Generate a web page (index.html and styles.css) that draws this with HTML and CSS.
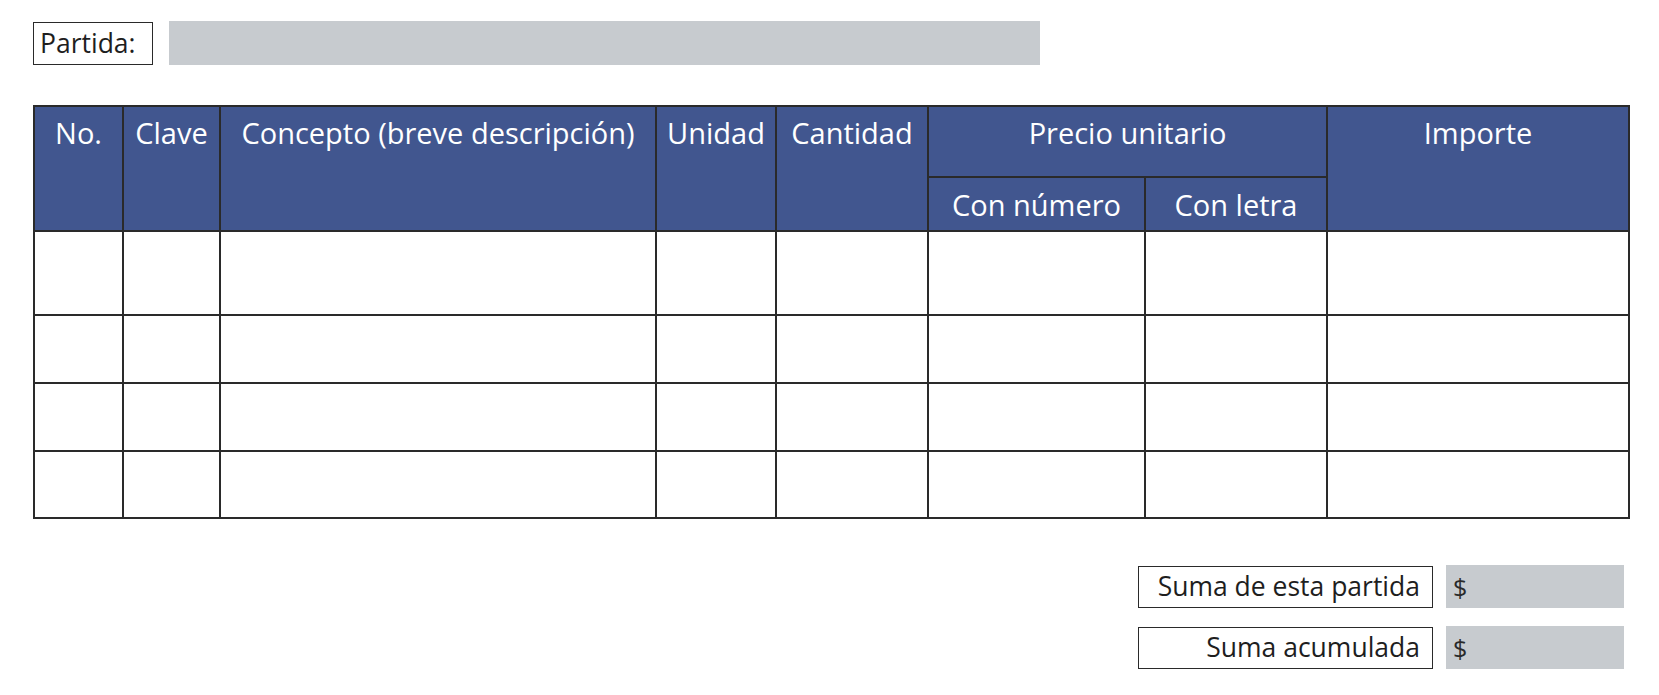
FILE: index.html
```html
<!DOCTYPE html>
<html lang="es">
<head>
<meta charset="utf-8">
<title>Partida</title>
<link rel="stylesheet" href="styles.css">
</head>
<body>
<div class="page">
  <div class="top-row">
    <div class="label-box partida">Partida:</div>
    <div class="fill-bar"></div>
  </div>

  <table class="grid">
    <colgroup>
      <col class="c-no"><col class="c-clave"><col class="c-concepto"><col class="c-unidad">
      <col class="c-cantidad"><col class="c-num"><col class="c-letra"><col class="c-importe">
    </colgroup>
    <thead>
      <tr class="h1">
        <th rowspan="2">No.</th>
        <th rowspan="2">Clave</th>
        <th rowspan="2">Concepto (breve descripción)</th>
        <th rowspan="2">Unidad</th>
        <th rowspan="2">Cantidad</th>
        <th colspan="2">Precio unitario</th>
        <th rowspan="2">Importe</th>
      </tr>
      <tr class="h2">
        <th class="sub">Con número</th>
        <th class="sub">Con letra</th>
      </tr>
    </thead>
    <tbody>
      <tr class="r1"><td></td><td></td><td></td><td></td><td></td><td></td><td></td><td></td></tr>
      <tr class="r2"><td></td><td></td><td></td><td></td><td></td><td></td><td></td><td></td></tr>
      <tr class="r2"><td></td><td></td><td></td><td></td><td></td><td></td><td></td><td></td></tr>
      <tr class="r3"><td></td><td></td><td></td><td></td><td></td><td></td><td></td><td></td></tr>
    </tbody>
  </table>

  <div class="totals">
    <div class="total-row">
      <div class="label-box sum">Suma de esta partida</div>
      <div class="fill-bar money">$</div>
    </div>
    <div class="total-row">
      <div class="label-box sum">Suma acumulada</div>
      <div class="fill-bar money">$</div>
    </div>
  </div>
</div>
</body>
</html>
```

FILE: styles.css
```css
html, body {
  margin: 0;
  padding: 0;
  background: #ffffff;
}

body {
  font-family: "Open Sans", "Noto Sans", "Liberation Sans", sans-serif;
  color: #1e1e1e;
}

.page {
  width: 1597px;
  margin-left: 33px;
  padding-top: 21px;
}

.top-row {
  display: flex;
  align-items: center;
  gap: 16px;
}

.label-box {
  box-sizing: border-box;
  border: 1.5px solid #2a2a2a;
  background: #fff;
  font-size: 26.5px;
  line-height: 1;
  display: flex;
  align-items: center;
  white-space: nowrap;
}

.partida {
  width: 120px;
  height: 43px;
  padding-left: 6px;
}

.fill-bar {
  background: #c7cbcf;
  height: 44px;
}

.top-row .fill-bar {
  width: 871px;
}

.grid {
  margin-top: 40px;
  border-collapse: collapse;
  table-layout: fixed;
  width: 1597px;
}

.c-no { width: 89px; }
.c-clave { width: 97px; }
.c-concepto { width: 436px; }
.c-unidad { width: 120px; }
.c-cantidad { width: 152px; }
.c-num { width: 217px; }
.c-letra { width: 182px; }
.c-importe { width: 302px; }

.grid th,
.grid td {
  border: 2px solid #2a2a2a;
  padding: 0;
}

.grid th {
  background: #41568f;
  color: #ffffff;
  font-weight: 400;
  font-size: 29px;
  text-align: center;
  vertical-align: top;
  padding-top: 6px;
  white-space: nowrap;
}

.grid th.sub {
  vertical-align: middle;
  padding-top: 0;
}

.h1 { height: 71px; }
.h2 { height: 54px; }
.r1 { height: 84px; }
.r2 { height: 68px; }
.r3 { height: 67px; }

.totals {
  margin-top: 46px;
  margin-right: 6px;
  display: flex;
  flex-direction: column;
  align-items: flex-end;
  gap: 18px;
}

.total-row {
  display: flex;
  align-items: center;
  gap: 13px;
}

.sum {
  width: 295px;
  height: 42px;
  justify-content: flex-end;
  padding-right: 12px;
}

.money {
  width: 178px;
  height: 43px;
  box-sizing: border-box;
  padding-left: 7px;
  font-size: 25px;
  display: flex;
  align-items: center;
  color: #2a2a2a;
}
```
